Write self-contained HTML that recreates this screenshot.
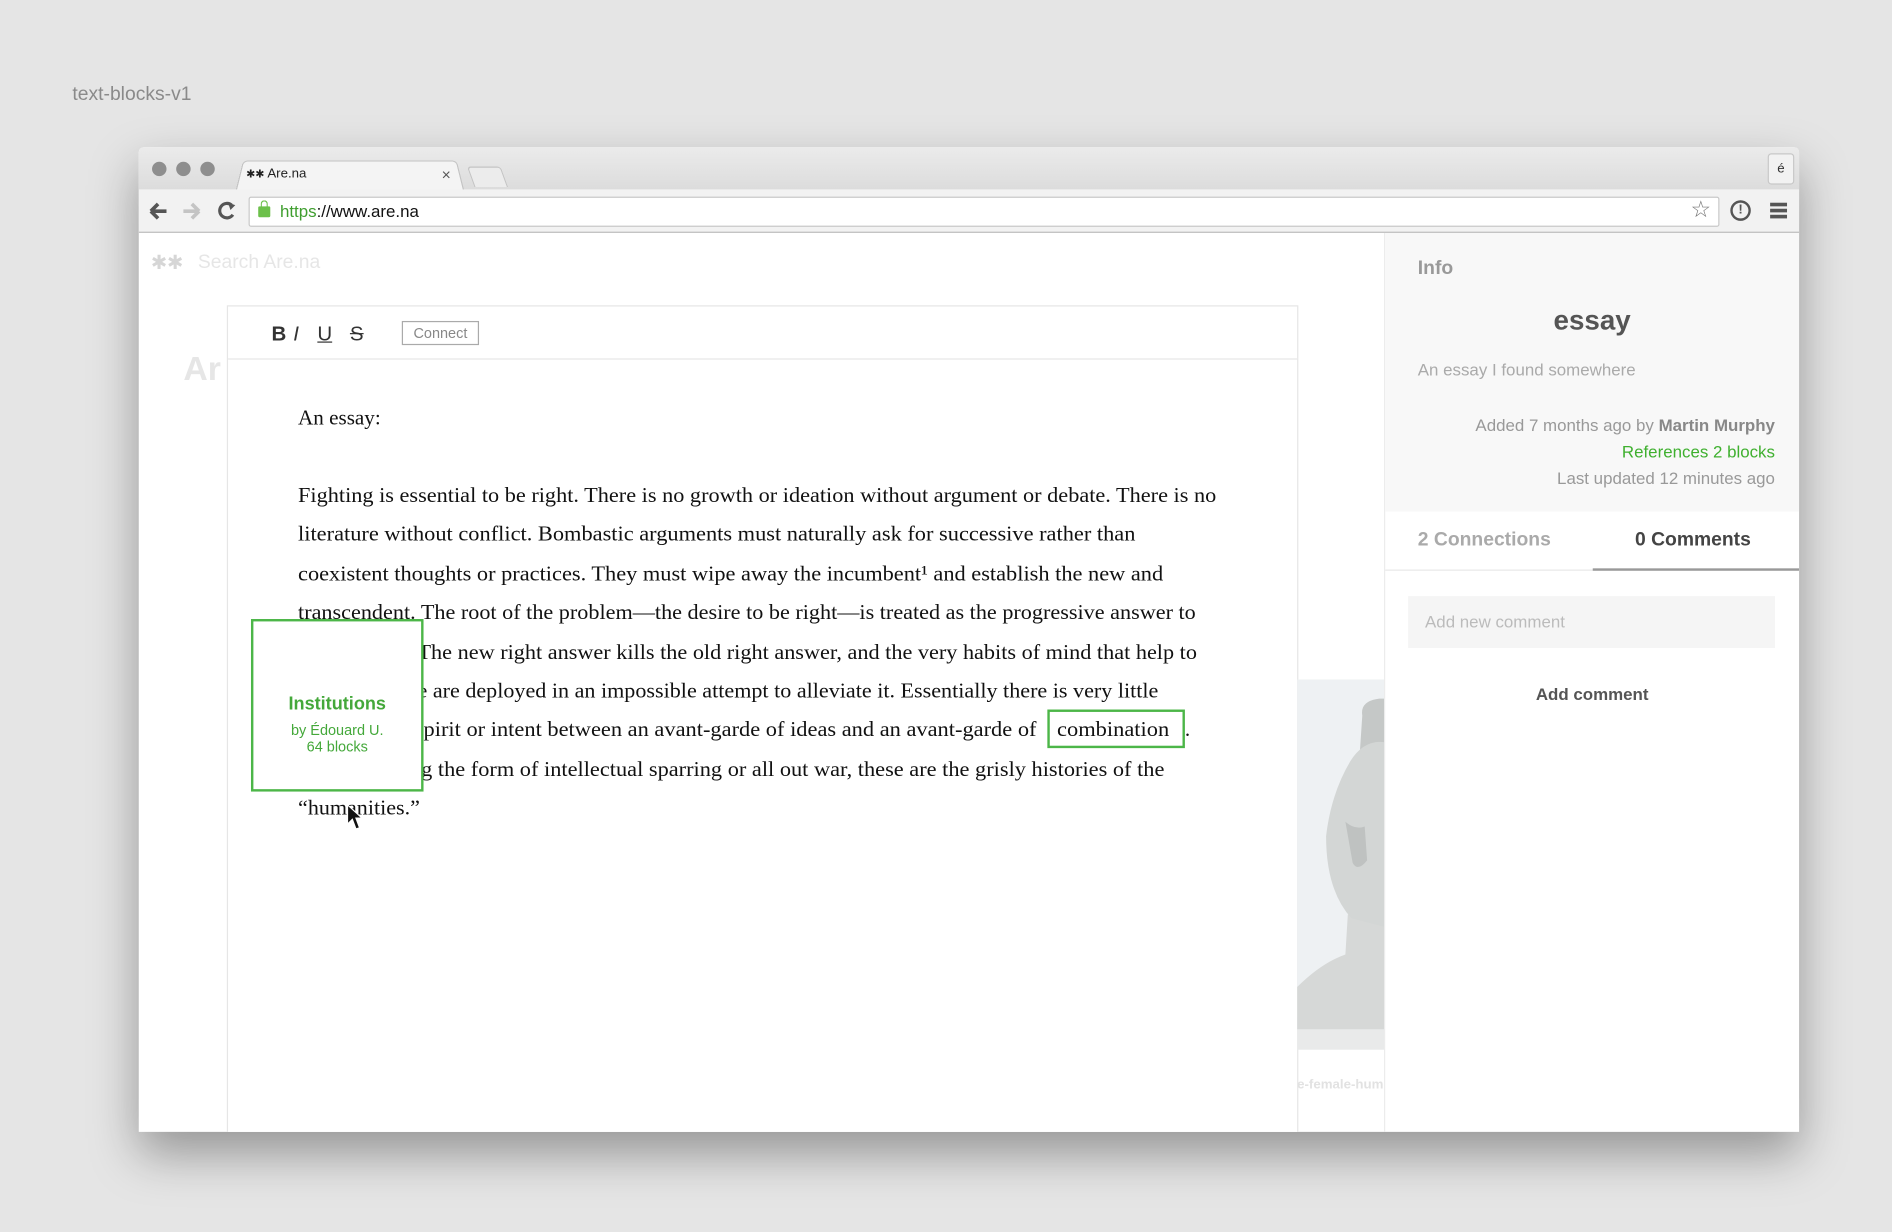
<!DOCTYPE html>
<html><head><meta charset="utf-8"><style>
html,body{margin:0;padding:0;width:1892px;height:1232px;overflow:hidden;background:#e5e5e5;}
#w{position:absolute;left:0;top:0;width:1568px;height:1021px;transform:scale(1.20663,1.20666);transform-origin:0 0;font-family:"Liberation Sans",sans-serif;}
.a{position:absolute;white-space:nowrap;}
</style></head><body><div id="w">
<div class="a" style="left:60px;top:70px;font-size:16px;color:#8a8a8a;">text-blocks-v1</div>
<div class="a" style="left:115px;top:122px;width:1376px;height:816px;background:#fff;box-shadow:0 18px 40px rgba(0,0,0,0.35);overflow:hidden;border-radius:4px 4px 0 0;">
 <div class="a" style="left:0;top:0;width:1376px;height:35px;background:linear-gradient(#ebebeb,#dcdcdc);"></div>
 <div class="a" style="left:11px;top:12px;width:12px;height:12px;border-radius:50%;background:#8e8e8e;"></div>
 <div class="a" style="left:31px;top:12px;width:12px;height:12px;border-radius:50%;background:#8e8e8e;"></div>
 <div class="a" style="left:51px;top:12px;width:12px;height:12px;border-radius:50%;background:#8e8e8e;"></div>
 <div class="a" style="left:80px;top:9px;width:188px;height:27px;background:#f4f4f4;border:1px solid #c4c4c4;border-bottom:none;border-radius:4px 4px 0 0;transform:perspective(40px) rotateX(6deg);transform-origin:bottom;"></div>
 <div class="a" style="left:89px;top:16px;font-size:11px;color:#222;"><span style="font-size:9px">✱✱</span> Are.na</div>
 <div class="a" style="left:251px;top:15px;font-size:13px;color:#555;">×</div>
 <div class="a" style="left:275px;top:16px;width:26px;height:16px;background:#ececec;border:1px solid #c4c4c4;border-bottom:none;border-radius:3px 3px 0 0;transform:skewX(20deg);"></div>
 <div class="a" style="left:1350px;top:5px;width:20px;height:24px;background:#f2f2f2;border:1px solid #c8c8c8;border-radius:3px;font-size:11px;text-align:center;line-height:24px;color:#333;">é</div>
 <div class="a" style="left:0;top:35px;width:1376px;height:35px;background:#f2f2f2;border-bottom:1px solid #bdbdbd;"></div>
 <svg class="a" style="left:8px;top:45px;" width="80" height="16"><path d="M2 8 H15 M2 8 L8 2 M2 8 L8 14" stroke="#555" stroke-width="3" fill="none"/><path d="M29 8 H42 M42 8 L36 2 M42 8 L36 14" stroke="#c4c4c4" stroke-width="3" fill="none"/><path d="M69 3 A6 6 0 1 0 70 11" stroke="#555" stroke-width="2.6" fill="none"/><path d="M66 1 L72 3 L68 7Z" fill="#555"/></svg>
 <div class="a" style="left:91px;top:41px;width:1217px;height:23px;background:#fff;border:1px solid #c9c9c9;border-radius:2px;"></div>
 <div class="a" style="left:99px;top:49px;width:10px;height:9px;background:#6cc04a;border-radius:1px;"></div>
 <div class="a" style="left:101px;top:44px;width:4px;height:6px;border:1.5px solid #6cc04a;border-bottom:none;border-radius:4px 4px 0 0;"></div>
 <div class="a" style="left:117px;top:45px;font-size:14px;color:#111;"><span style="color:#3f9e2f">https</span>://www.are.na</div>
 <div class="a" style="left:1286px;top:41px;font-size:19px;color:#777;">☆</div>
 <div class="a" style="left:1319px;top:44px;width:13px;height:13px;border:2px solid #555;border-radius:50%;font-size:11px;font-weight:bold;text-align:center;line-height:13px;color:#555;">!</div>
 <div class="a" style="left:1352px;top:46px;width:14px;height:3px;background:#555;box-shadow:0 5px 0 #555,0 10px 0 #555;"></div>
 <div class="a" style="left:10px;top:86px;font-size:16px;color:#d6d6d6;">✱✱</div>
 <div class="a" style="left:49px;top:87px;font-size:16px;color:#e6e6e6;">Search Are.na</div>
 <div class="a" style="left:37px;top:168px;font-size:28px;font-weight:bold;color:#e6e6e6;">Ar</div>
 <div class="a" style="left:73px;top:131px;width:886px;height:700px;border:1px solid #e6e6e6;background:#fff;"></div>
 <div class="a" style="left:74px;top:175px;width:886px;height:1px;background:#e6e6e6;"></div>
 <div class="a" style="left:110px;top:145px;font-size:17px;color:#333;"><b>B</b></div>
 <div class="a" style="left:128px;top:145px;font-size:17px;color:#333;"><i>I</i></div>
 <div class="a" style="left:148px;top:145px;font-size:17px;color:#333;"><u>U</u></div>
 <div class="a" style="left:175px;top:145px;font-size:17px;color:#333;"><s>S</s></div>
 <div class="a" style="left:218px;top:144px;width:62px;height:18px;border:1px solid #aaa;font-size:12px;color:#888;text-align:center;line-height:18px;">Connect</div>
 <svg class="a" style="left:960px;top:441px;" width="72" height="307">
  <rect width="72" height="307" fill="#eef1f3"/>
  <rect y="280" width="72" height="27" fill="#e9eaea"/>
  <path d="M72 185 L72 290 L0 290 L0 255 Q20 235 40 228 L42 195Z" fill="#d6d8d7"/>
  <path d="M54 30 Q52 18 68 16 L72 16 L72 60 Q60 55 52 60Z" fill="#c5c8c7"/>
  <path d="M72 52 Q55 50 44 68 Q28 95 24 130 Q24 175 45 198 L72 205Z" fill="#d3d6d5"/>
  <path d="M40 118 Q48 125 56 122 L58 150 Q50 160 46 152Z" fill="#bfc2c1"/>
 </svg>
 <div class="a" style="left:960px;top:771px;font-size:11px;font-weight:bold;color:#e2e2e2;">e-female-hum</div>
 <div class="a" style="left:1032px;top:71px;width:1px;height:745px;background:#ececec;"></div>
 <div class="a" style="left:1033px;top:71px;width:343px;height:231px;background:#f8f8f8;"></div>
 <div class="a" style="left:1060px;top:92px;font-size:16px;font-weight:bold;color:#999;">Info</div>
 <div class="a" style="left:1033px;top:130px;width:343px;text-align:center;font-size:23px;font-weight:bold;color:#555;">essay</div>
 <div class="a" style="left:1060px;top:176px;font-size:14px;color:#aaa;">An essay I found somewhere</div>
 <div class="a" style="right:20px;top:219px;font-size:14px;color:#999;text-align:right;line-height:22px;">Added 7 months ago by <b style="color:#888">Martin Murphy</b><br><span style="color:#3fb02f">References 2 blocks</span><br>Last updated 12 minutes ago</div>
 <div class="a" style="left:1060px;top:317px;font-size:16px;font-weight:bold;color:#aaa;">2 Connections</div>
 <div class="a" style="left:1240px;top:317px;font-size:16px;font-weight:bold;color:#444;">0 Comments</div>
 <div class="a" style="left:1033px;top:350px;width:343px;height:1px;background:#e8e8e8;"></div>
 <div class="a" style="left:1205px;top:349px;width:171px;height:2px;background:#999;"></div>
 <div class="a" style="left:1052px;top:372px;width:304px;height:43px;background:#f5f5f5;"></div>
 <div class="a" style="left:1066px;top:385px;font-size:14px;color:#bbb;">Add new comment</div>
 <div class="a" style="left:1033px;top:445px;width:343px;text-align:center;font-size:14px;font-weight:bold;color:#555;">Add comment</div>
</div>
<svg class="a" style="left:0;top:0;" width="1568" height="1021" font-family="Liberation Serif, serif" font-size="17.5" fill="#111">
<text x="247" y="352">An essay:</text>
<text x="247" y="416" textLength="761" lengthAdjust="spacingAndGlyphs">Fighting is essential to be right. There is no growth or ideation without argument or debate. There is no</text>
<text x="247" y="448" textLength="694" lengthAdjust="spacingAndGlyphs">literature without conflict. Bombastic arguments must naturally ask for successive rather than</text>
<text x="247" y="481" textLength="717" lengthAdjust="spacingAndGlyphs">coexistent thoughts or practices. They must wipe away the incumbent¹ and establish the new and</text>
<text x="247" y="513" textLength="744" lengthAdjust="spacingAndGlyphs">transcendent. The root of the problem—the desire to be right—is treated as the progressive answer to</text>
<text x="346" y="546" textLength="646" lengthAdjust="spacingAndGlyphs">The new right answer kills the old right answer, and the very habits of mind that help to</text>
<text x="346" y="578" textLength="614" lengthAdjust="spacingAndGlyphs">e are deployed in an impossible attempt to alleviate it. Essentially there is very little</text>
<text x="351" y="610" textLength="508" lengthAdjust="spacingAndGlyphs">pirit or intent between an avant-garde of ideas and an avant-garde of</text>
<text x="876" y="610" textLength="93" lengthAdjust="spacingAndGlyphs">combination</text>
<text x="982" y="610">.</text>
<text x="349" y="643" textLength="616" lengthAdjust="spacingAndGlyphs">g the form of intellectual sparring or all out war, these are the grisly histories of the</text>
<text x="247" y="675" textLength="101" lengthAdjust="spacingAndGlyphs">“humanities.”</text>
</svg>
<div class="a" style="left:868px;top:588px;width:110px;height:28px;border:2px solid #4cb648;"></div>
<div class="a" style="left:208px;top:513px;width:139px;height:139px;border:2px solid #4cb648;background:#fff;text-align:center;color:#44a83a;">
 <div style="margin-top:60px;font-size:15px;font-weight:bold;">Institutions</div>
 <div style="margin-top:6px;font-size:12px;line-height:14px;">by Édouard U.<br>64 blocks</div>
</div>
<svg class="a" style="left:287px;top:666px;" width="16" height="24"><path d="M1 1 L1 17 L5 13 L8 21 L11 20 L8 12 L13 12 Z" fill="#111" stroke="#fff" stroke-width="1"/></svg>
</div></body></html>
